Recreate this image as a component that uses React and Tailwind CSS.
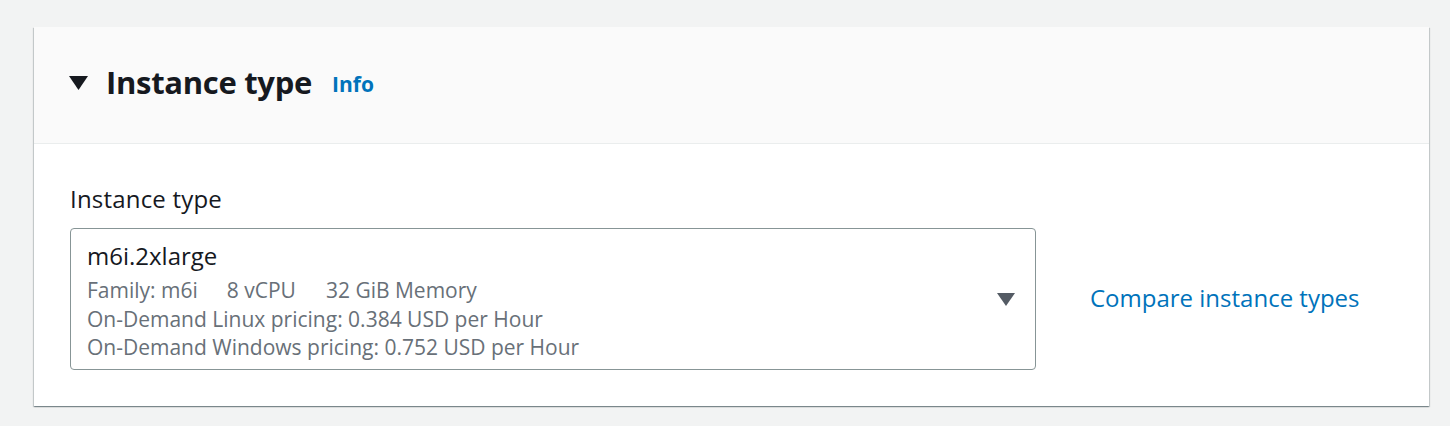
export default function App() {
  return (
    <div className="w-[1450px] h-[426px] bg-[#f2f3f3] pt-[27px] pl-[34px] pr-[21px]" style={{ fontFamily: '"Open Sans", "Noto Sans", sans-serif' }}>
      <div className="bg-white shadow-[0_1px_1px_0_rgba(0,28,36,0.3),1px_1px_1px_0_rgba(0,28,36,0.15),-1px_1px_1px_0_rgba(0,28,36,0.15)]">
        <div className="h-[117px] bg-[#fafafa] border-b border-[#eaeded] flex items-center pl-[35px] pb-[6px]">
          <svg width="19" height="14" viewBox="0 0 19 14" className="mt-[2px]">
            <polygon points="0,0 19,0 9.5,14" fill="#16191f" />
          </svg>
          <h2 className="ml-[18px] text-[31px] leading-[40px] font-bold text-[#16191f] tracking-[-0.3px]">Instance type</h2>
          <span className="ml-[20px] mt-[6px] text-[21px] font-bold text-[#0073bb]">Info</span>
        </div>
        <div className="pl-[36px] pt-[40px] pb-[36px] flex items-end">
          <div className="w-[966px]">
            <div className="text-[24px] leading-[30px] text-[#16191f] mb-[14px] tracking-[0.2px]">Instance type</div>
            <div className="h-[142px] border border-[#879596] rounded-[4px] pl-[16px] pr-[20px] pt-[12px] flex">
              <div className="flex-1">
                <div className="text-[24px] leading-[30px] text-[#16191f]">m6i.2xlarge</div>
                <div className="mt-[5px] text-[21px] leading-[28.5px] text-[#687078]">
                  <div>Family: m6i<span className="ml-[29px]">8 vCPU</span><span className="ml-[30px]">32 GiB Memory</span></div>
                  <div>On-Demand Linux pricing: 0.384 USD per Hour</div>
                  <div>On-Demand Windows pricing: 0.752 USD per Hour</div>
                </div>
              </div>
              <svg width="18" height="13" viewBox="0 0 18 13" className="mt-[52px]">
                <polygon points="0,0 18,0 9,13" fill="#545b64" />
              </svg>
            </div>
          </div>
          <div className="h-[142px] flex items-center">
            <a className="ml-[54px] mb-[2px] text-[24px] text-[#0073bb]">Compare instance types</a>
          </div>
        </div>
      </div>
    </div>
  );
}
